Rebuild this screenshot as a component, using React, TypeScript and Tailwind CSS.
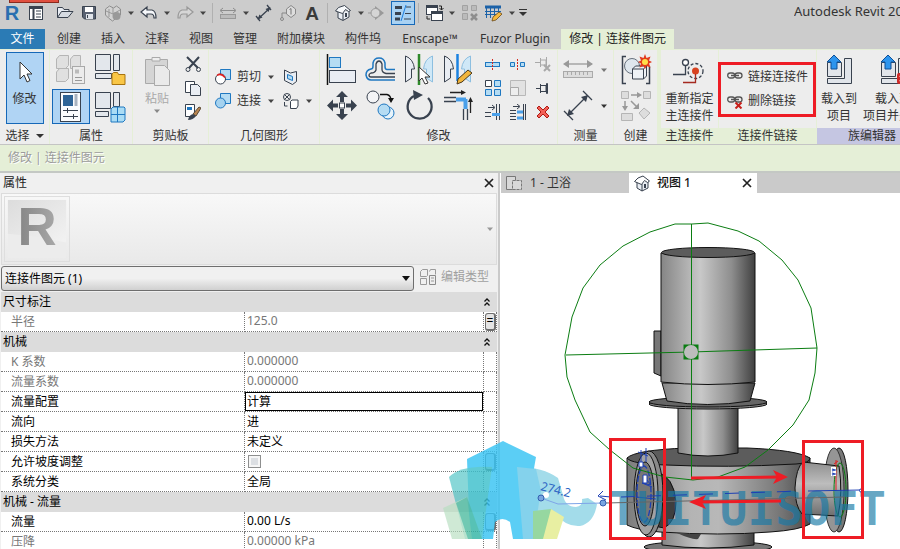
import type { ReactNode } from "react";

const INK = "#39424f";
const PALE = "#e9edf3";
const GREY = "#a9a9a9";
const BLUE = "#1f78c1";
const SKY = "#b5dcf3";

function Icon({ size = 32, children }: { size?: number; children: ReactNode }) {
  return (
    <svg width={size} height={size} viewBox={`0 0 ${size} ${size}`} fill="none" className="shrink-0" aria-hidden="true">
      {children}
    </svg>
  );
}

function Caret({ color = "#444" }: { color?: string }) {
  return (
    <svg width="8" height="8" viewBox="0 0 8 8" className="shrink-0" aria-hidden="true">
      <path d="M1 2.500h6L4 6z" fill={color} />
    </svg>
  );
}

const qat = [
  {
    name: "属性窗口",
    icon: (
      <>
        <rect x="5.500" y="5.500" width="13" height="13" fill="#fff" stroke={INK} />
        <path d="M5 7h14M9.500 7v12" stroke={INK} strokeWidth="2" />
        <path d="M12 10h5M12 13h5M12 16h5" stroke={INK} />
      </>
    ),
  },
  {
    name: "打开",
    gap: true,
    icon: (
      <>
        <path d="M4.500 16.500v-10h5l1.500 2h5v2" fill={PALE} stroke={INK} />
        <path d="M4.500 16.500l4-6h11.500l-5 6z" fill="#d6dbe2" stroke={INK} />
      </>
    ),
  },
  {
    name: "保存",
    icon: (
      <>
        <path d="M5.500 5.500h13v12.500h-11l-2-2z" fill="#596272" stroke={INK} />
        <rect x="8" y="6" width="8" height="5" fill="#fff" />
        <rect x="9" y="13" width="7" height="5" fill="#dfe3e9" />
        <path d="M10.500 14v3" stroke={INK} />
      </>
    ),
  },
  {
    name: "同步",
    caret: true,
    icon: (
      <>
        <path d="M4.500 8l4-3 4 2 3-2 4 3v6l-4 3-4 3-4-3-3-3z" fill="#d2d2d2" stroke="#8e8e8e" />
        <path d="M8 8v8M12 7v6M5 10l7 3 7-4" stroke="#999" />
        <circle cx="15.500" cy="15" r="4" fill="#999" />
      </>
    ),
  },
  {
    name: "放弃",
    caret: true,
    icon: <path d="M4 11l6-5v3h5q4 1 4 8h-2q0-4-3-4h-4v3z" fill="#f5f7fa" stroke={INK} strokeWidth="1.200" />,
  },
  {
    name: "重做",
    caret: true,
    icon: <path d="M20 11l-6-5v3h-5q-4 1-4 8h2q0-4 3-4h4v3z" fill="#d6d6d6" stroke="#999" strokeWidth="1.200" />,
    sep: true,
  },
  {
    name: "测量",
    caret: true,
    icon: (
      <>
        <path d="M5 9.500h14M7 7l-3 2.500 3 2.500M17 7l3 2.500-3 2.500" stroke="#8d8d8d" />
        <rect x="4.500" y="13.500" width="15" height="4" fill="#bbb" stroke="#999" />
      </>
    ),
  },
  {
    name: "对齐尺寸标注",
    icon: (
      <>
        <path d="M6 18L18 7M4 15l4 5M15 4l4 5" stroke={INK} strokeWidth="1.300" />
        <path d="M5.500 18.500l2-5 3 3zM18.500 6l-5 2 3 3z" fill={INK} />
      </>
    ),
  },
  {
    name: "按类别标记",
    icon: (
      <>
        <path d="M6 18v-6h5" stroke="#888" />
        <circle cx="6" cy="18" r="1.500" fill="#ccc" stroke="#888" />
        <path d="M10.500 8l4.500-3.500 4.500 3.500v5l-4.500 3.500-4.500-3.500z" fill="#ddd" stroke="#888" />
        <path d="M13.500 8.500L15 7.500v6" stroke="#777" />
      </>
    ),
  },
  {
    name: "文字",
    icon: (
      <text x="12" y="19" textAnchor="middle" fontSize="19" fontWeight="700" fill="#3a3a3a" className="font-['Liberation_Sans',sans-serif]">
        A
      </text>
    ),
    sep: true,
  },
  {
    name: "默认三维视图",
    caret: true,
    icon: (
      <>
        <path d="M7 11v6l5 2.500 6-3.500v-6" fill={PALE} stroke={INK} />
        <path d="M4.500 10l3-3.500 6-2 6 5-2 1-3-2-3 4z" fill="#f7f9fb" stroke={INK} />
        <path d="M12 12v7" stroke={INK} />
        <rect x="14" y="12" width="2" height="4" fill={INK} />
      </>
    ),
  },
  {
    name: "剖面",
    icon: (
      <>
        <path d="M8 5l9 7-9 7z" fill="#999" />
        <circle cx="8.500" cy="12" r="4.500" fill="#d5d5d5" stroke="#999" />
        <path d="M1 12h3" stroke="#999" />
      </>
    ),
  },
  {
    name: "细线",
    selected: true,
    icon: (
      <>
        <path d="M4 6.500h7M4 12.500h6M4 18h5" stroke={INK} strokeWidth="3" />
        <path d="M15 6h5M14 12.500h6M13 18h7" stroke={INK} />
        <path d="M15 4l-5 16" stroke="#1b7fe0" />
      </>
    ),
    sep: true,
  },
  {
    name: "切换窗口",
    caret: true,
    icon: (
      <>
        <rect x="4.500" y="4.500" width="11" height="9" fill="#fff" stroke={INK} />
        <path d="M4 6h12" stroke={INK} strokeWidth="2" />
        <rect x="9.500" y="10.500" width="11" height="9" fill="#fff" stroke={INK} />
        <path d="M9 12h12" stroke={INK} strokeWidth="2" />
        <path d="M17 5h2.500v4M17.500 7l2 2 2-2M5 15v3h3" stroke="#222" />
      </>
    ),
  },
  {
    name: "关闭隐藏",
    icon: (
      <>
        <path d="M4.500 4.500h5v5h-5zM13.500 4.500h5v5h-5zM4.500 12.500h5v6h-5z" fill="#bbb" stroke="#a2a2a2" />
        <path d="M13 13l6 6M19 13l-6 6" stroke="#8e8e8e" strokeWidth="2.500" />
      </>
    ),
  },
  {
    name: "明细表",
    caret: true,
    icon: (
      <>
        <path d="M3 6h16" stroke="#1c62a8" strokeWidth="3" />
        <path d="M4.500 7v10M8.500 7v10M12.500 7v8M16.500 7v5M3 10.500h16M3 13.500h12" stroke="#1c62a8" />
        <path d="M10 20l1-4 6-5 3 2-6 6z" fill="#f5b83d" stroke="#6b4a1b" strokeWidth=".8" />
      </>
    ),
  },
];

const tabs = ["创建", "插入", "注释", "视图", "管理", "附加模块", "构件坞"];

function QuickAccess() {
  return (
    <header className="relative flex h-[29px] items-center pb-1">
      <Icon size={24}>
        <text x="12" y="19" textAnchor="middle" fontSize="20" fontWeight="700" fill="#2a6fb0" className="font-['Liberation_Sans',sans-serif]">
          R
        </text>
      </Icon>
      <div className="absolute top-0 left-[9px] h-[3px] w-[50px] border border-t-0 border-[#8a2a1e] bg-[#e04f3f]" />
      {qat.map((item) => (
        <div key={item.name} className={item.gap ? "ml-[5px] flex items-center" : "flex items-center"}>
          <button
            type="button"
            aria-label={item.name}
            className={item.selected ? "bg-[#a9d2f3] outline-1 -outline-offset-1 outline-[#1668b8]" : ""}
          >
            <Icon size={24}>{item.icon}</Icon>
          </button>
          {item.caret && (
            <span className="flex w-3 justify-center">
              <Caret />
            </span>
          )}
          {item.sep && <span className="mx-[3px] h-5 w-px bg-[#b0b0b0]" />}
        </div>
      ))}
      <button type="button" aria-label="自定义快速访问工具栏" className="w-3">
        <svg width="10" height="10" viewBox="0 0 10 10" aria-hidden="true">
          <path d="M1 1.500h8" stroke="#333" />
          <path d="M1 4h8L5 8z" fill="#333" />
        </svg>
      </button>
      <h1 className="ml-auto w-[106px] overflow-hidden pb-1 text-[13px] leading-5 font-normal whitespace-nowrap text-[#333]">
        Autodesk Revit 2020
      </h1>
    </header>
  );
}

function Tabs() {
  return (
    <nav className="flex h-5 overflow-hidden leading-5 whitespace-nowrap text-[#333]">
      <button type="button" className="mr-0.5 w-[45px] shrink-0 bg-[#2b7bb5] text-white">
        文件
      </button>
      {tabs.map((tab) => (
        <button key={tab} type="button" className="shrink-0 px-2.5">
          {tab}
        </button>
      ))}
      <button type="button" className="w-[78px] shrink-0">
        Enscape™
      </button>
      <button type="button" className="w-[92px] shrink-0">
        Fuzor Plugin
      </button>
      <button type="button" className="w-[113px] shrink-0 bg-[#e5efd7] text-[#222]">
        修改 | 连接件图元
      </button>
    </nav>
  );
}

const propertyIcons = [
  {
    name: "类型属性",
    icon: (
      <>
        <path d="M1.500 5l3-3.500h9v10l-3 3h-9zM15.500 5l3-3.500h7v10l-2 3h-8zM1.500 18l3-3.500h9v10l-3 3h-9z" fill="#e0e0e0" stroke="#b5b5b5" />
        <rect x="17.500" y="12.500" width="12" height="17" fill="#ececec" stroke="#a9a9a9" />
        <path d="M20 15.500h4v4h-4z" fill="#bbb" />
        <path d="M20 23.500h7M20 26.500h7" stroke="#999" />
      </>
    ),
  },
  {
    name: "族类别和族参数",
    icon: (
      <>
        <path d="M.5.500h15v16H.5zM18.500.500h6v16h-6zM.5 19.500h16v5H.5z" fill="#e3e7ec" stroke={INK} />
        <path d="M17 30.500V20l1.500-1.500h4l1 2h6.500v10z" fill="#f9c646" stroke="#a87410" />
      </>
    ),
  },
  {
    name: "属性",
    selected: true,
    icon: (
      <>
        <rect x="5.500" y="1.500" width="20" height="29" fill="#fbfcfd" stroke={INK} />
        <rect x="8" y="4" width="10" height="11" fill="#2f6496" />
        <path d="M21 3v12" stroke="#a9b3bf" strokeWidth="3" />
        <path d="M8 19.500h15M8 25.500h15M12.500 17v5M18.500 23v5" stroke={INK} />
      </>
    ),
  },
  {
    name: "族类型",
    icon: (
      <>
        <path d="M.5 1.500h15v16H.5zM18.500 1.500h6v14h-6zM.5 20.500h13v5H.5z" fill="#e3e7ec" stroke={INK} />
        <path d="M16 18l2-2h11l1 1v12l-2 2H16z" fill="#aadcf5" stroke={BLUE} />
        <path d="M16 23.500h14M22.500 16v15" stroke={BLUE} />
      </>
    ),
  },
];

const clipboardIcons = [
  {
    name: "剪切到剪贴板",
    icon: (
      <>
        <path d="M2 1l11 11M14 1L4 12" stroke={INK} strokeWidth="2" />
        <circle cx="3" cy="13.500" r="2" stroke={INK} />
        <circle cx="13.500" cy="13.500" r="2" stroke={INK} />
      </>
    ),
  },
  {
    name: "复制到剪贴板",
    icon: (
      <>
        <path d="M.5 1.500h9v11h-9z" fill="#fff" stroke={INK} />
        <path d="M5.500 4.500h7l3 3v8h-10z" fill={PALE} stroke={INK} />
      </>
    ),
  },
  {
    name: "匹配类型属性",
    icon: (
      <>
        <path d="M.5.500h9v12h-9z" fill="#fff" stroke={INK} />
        <path d="M2 3h5v3H2z" fill={BLUE} />
        <path d="M8 10l6-7 2 1-5 8z" fill="#b98550" stroke="#5a4a35" />
        <path d="M3 16q1-5 5-6l3 2q-3 4-8 4z" fill={INK} />
      </>
    ),
  },
];

const modifyIcons = [
  {
    name: "对齐",
    icon: (
      <>
        <path d="M1.500 0v31" stroke="#111" strokeWidth="1.500" />
        <rect x="3.500" y="3.500" width="11" height="10" fill={SKY} stroke={BLUE} />
        <rect x="3.500" y="16.500" width="26" height="12" fill={PALE} stroke={INK} />
      </>
    ),
  },
  {
    name: "偏移",
    icon: (
      <>
        <path d="M30 15.500h-8q-2 0-2-3V9q-1-5-6-5T8 9v3q0 3-2 3-5 1-5 6 1 5 5 5h24" stroke={BLUE} strokeWidth="1.500" />
        <path d="M30 19.500h-9q-4-1-4-4V10q-1-3-3-3t-3 3v6q-1 3-5 3-2 1-2 2 0 2 2 2h24" stroke={INK} strokeWidth="1.300" />
      </>
    ),
  },
  {
    name: "镜像 - 拾取轴",
    icon: (
      <>
        <path d="M1.500 2q8 3 9 13h-3v9l-6 4z" fill={PALE} stroke={INK} />
        <path d="M28.500 2q-8 3-9 13h3v9l6 4z" fill="#cfe8f7" stroke="#8dbfe0" />
        <path d="M15 0v31" stroke="#2f8a2b" strokeWidth="2.500" />
        <path d="M15 13v14l3-3 3 6 3-1-3-6h5z" fill="#fff" stroke="#333" />
      </>
    ),
  },
  {
    name: "镜像 - 绘制轴",
    icon: (
      <>
        <path d="M1.500 2q8 3 9 13h-3v9l-6 4z" fill={PALE} stroke={INK} />
        <path d="M27.500 2q-8 3-9 13h3v9l6 4z" fill="#cfe8f7" stroke="#8dbfe0" />
        <path d="M14.500 0v27" stroke="#1b82e0" strokeWidth="2.500" />
        <path d="M14 30l1-5 10-9 4 3-10 9z" fill="#f2b63c" stroke="#4a3719" />
      </>
    ),
  },
  {
    name: "移动",
    icon: (
      <>
        <path d="M16 1l6 6h-4v5h-4V7h-4zM16 30l6-6h-4v-5h-4v5h-4zM1 15.500l6-6v4h5v4H7v4zM31 15.500l-6-6v4h-5v4h5v4z" fill={INK} />
        <rect x="13.500" y="13" width="5" height="5" fill="#fff" stroke={INK} />
      </>
    ),
  },
  {
    name: "复制",
    icon: (
      <>
        <circle cx="8" cy="7" r="6" fill="#f3f4f6" stroke={INK} />
        <path d="M15 4.500h7q4 1 4 6" stroke="#111" strokeWidth="1.300" />
        <path d="M23 8h6l-3 5z" fill="#111" />
        <circle cx="23" cy="23" r="6" fill="#e8f4fb" stroke={BLUE} />
        <circle cx="19" cy="20" r="6" fill={SKY} stroke={BLUE} />
      </>
    ),
  },
  {
    name: "旋转",
    icon: (
      <>
        <path d="M24 8a12 12 0 1 1-14-2" stroke={INK} strokeWidth="2.300" />
        <path d="M9 0l10 5-9 5z" fill={INK} />
      </>
    ),
  },
  {
    name: "修剪/延伸为角",
    icon: (
      <>
        <path d="M7 2.500h13M27.500 23V10" stroke="#222" strokeWidth="1.300" />
        <path d="M18 0l5 2.500-5 2.500zM25 12l2.500-5 2.500 5z" fill="#222" />
        <path d="M1 7.500h12M1 11.500h12M20.500 19v11M24.500 19v11" stroke={INK} strokeWidth="1.300" />
        <path d="M13 9.500h10M22.500 9v10" stroke="#4aa0ea" strokeWidth="4" />
      </>
    ),
  },
];

const smallModifyIcons = [
  {
    name: "拆分图元",
    icon: (
      <>
        <rect x=".5" y="6.500" width="14" height="4" fill={SKY} stroke={BLUE} />
        <path d="M7.500 3v11" stroke="#d5281e" strokeDasharray="2 1" />
      </>
    ),
  },
  {
    name: "用间隙拆分",
    icon: (
      <>
        <path d="M.5 6.500h4v4h-4zM10.500 6.500h4v4h-4z" fill={SKY} stroke={BLUE} />
        <path d="M7.500 3v11" stroke="#d5281e" strokeDasharray="2 1" />
      </>
    ),
  },
  {
    name: "解锁",
    icon: (
      <>
        <path d="M0 6.500h5M5.500 2v9M6 4h5v5H6M11.500 1v11" stroke={GREY} />
        <path d="M9 9l6 6M15 9l-6 6" stroke={GREY} strokeWidth="2" />
      </>
    ),
  },
  {
    name: "阵列",
    icon: (
      <>
        <path d="M.5.500h6v6h-6z" fill="#fff" stroke={INK} />
        <path d="M9.500.500h6v6h-6zM.5 9.500h6v6h-6zM9.500 9.500h6v6h-6z" fill={SKY} stroke={BLUE} />
      </>
    ),
  },
  {
    name: "缩放",
    icon: (
      <>
        <path d="M.5.500h15v15h-15z" fill="#e2e2e2" stroke="#b8b8b8" />
        <path d="M.5 7.500h8v8h-8z" fill="#eee" stroke="#a9a9a9" />
      </>
    ),
  },
  {
    name: "锁定",
    icon: (
      <path d="M1 8.500h4M5.500 4v9M6 5.500h5v6H6M11.500 3.500h1v10h-1z" stroke={INK} />
    ),
  },
  {
    name: "修剪/延伸单个图元",
    icon: (
      <>
        <path d="M3 3.500h6M7 1l3 2.500L7 6M0 8.500h6M0 12.500h6M11.500 0v16M14.500 0v16" stroke={INK} />
        <path d="M7 10.500h8" stroke="#4aa0ea" strokeWidth="3" />
      </>
    ),
  },
  {
    name: "修剪/延伸多个图元",
    icon: (
      <>
        <path d="M3 2.500h6M7 0l3 2.500L7 5M0 6.500h6M0 9.500h6M0 12.500h6M0 15.500h6M13.500 0v16M15.500 0v16" stroke={INK} />
        <path d="M7 8h6M7 14h6" stroke="#4aa0ea" strokeWidth="3" />
      </>
    ),
  },
  {
    name: "删除",
    icon: <path d="M2 4l2-2 4 4 4-4 2 2-4 4 4 4-2 2-4-4-4 4-2-2 4-4z" fill="#f26158" stroke="#b01a14" />,
  },
];

const measureIcons = [
  {
    name: "测量两个参照之间的距离",
    caret: "#777",
    icon: (
      <>
        <path d="M3 10h27" stroke="#999" strokeWidth="1.300" />
        <path d="M1 10l6-4v8zM31 10l-6-4v8z" fill="#999" />
        <rect x="1.500" y="17.500" width="29" height="6" fill="#ddd" stroke="#aaa" />
        <path d="M5.500 18v3M9.500 18v3M13.500 18v3M17.500 18v3M21.500 18v3M25.500 18v3" stroke="#aaa" />
      </>
    ),
  },
  {
    name: "对齐尺寸标注",
    caret: "#333",
    icon: (
      <>
        <path d="M6 25L25 6M2 21l9 9M21 1l9 9" stroke={INK} strokeWidth="1.300" />
        <path d="M5 26l2-7 5 5zM26 5l-7 2 5 5z" fill={INK} />
      </>
    ),
  },
];

const createIcons = [
  {
    name: "创建组",
    icon: (
      <>
        <path d="M6 2.500H2.500v27H6M26 29.500h3.500v-17" stroke={INK} strokeWidth="1.500" />
        <circle cx="12" cy="12" r="7.500" fill="#dfe7ee" stroke="#66707d" />
        <path d="M12.500 15l3-3h11v10l-3 3h-11z" fill="#eef2f6" stroke={INK} />
        <path d="M12.500 15h11v10M23.500 15l3-3" stroke={INK} />
        <path d="M25 0l1.500 4 4-1.500-1.500 4 3 1.500-3 1.500 1.500 4-4-1.500-1.500 3-1.500-3-4 1.500 1.500-4-3-1.500 3-1.500-1.500-4 4 1.500z" fill="#e23a1c" />
        <circle cx="25" cy="8" r="3" fill="#ffe04a" />
      </>
    ),
  },
  {
    name: "创建类似实例",
    icon: (
      <>
        <path d="M1.500 1.500h7v7h-7zM23.500 1.500h7v7h-7zM1.500 23.500h11v7h-11zM24 18l6 5-6 6-5-6z" fill="#ddd" stroke="#b5b5b5" />
        <path d="M11 5h8M5 11v7M11 11l6 6" stroke="#999" strokeWidth="1.500" />
        <path d="M17 2l5 3-5 3zM2 16h6l-3 5zM19 13v6h-6z" fill="#999" />
      </>
    ),
  },
];

function Panel({
  title,
  className,
  tone = "",
  children,
}: {
  title: ReactNode;
  className: string;
  tone?: string;
  children: ReactNode;
}) {
  return (
    <section className={`flex shrink-0 flex-col bg-[#ededed] ${className}`}>
      <div className="flex flex-1 items-start pt-0.5">{children}</div>
      <h2 className={`flex h-4 items-center justify-center gap-1.5 leading-4 font-normal ${tone}`}>{title}</h2>
    </section>
  );
}

function LoadIcon({ close }: { close?: boolean }) {
  return (
    <Icon>
      <path d="M4.500 7.500h14v14h-14zM21.500 3.500h7v25h-24v-5h17z" fill="#e1e5ea" stroke={INK} />
      <path d="M11 0l7 7h-4v7H8V7H4z" fill="#2d95ee" stroke="#0f4f96" />
      {close && (
        <>
          <rect x="20" y="18" width="12" height="11" rx="2" fill="#cf2a27" />
          <path d="M23 20.500l6 6M29 20.500l-6 6" stroke="#fff" strokeWidth="2" />
        </>
      )}
    </Icon>
  );
}

function ChainIcon({ remove }: { remove?: boolean }) {
  return (
    <Icon size={16}>
      <rect x=".7" y="4" width="7" height="5" rx="2.500" stroke="#555" strokeWidth="1.300" />
      <rect x="8" y="4" width="7" height="5" rx="2.500" stroke="#555" strokeWidth="1.300" />
      <path d="M4 6.500h8" stroke="#555" strokeWidth="1.500" />
      {remove && <path d="M8.500 9.500l6 6M14.500 9.500l-6 6" stroke="#c8201c" strokeWidth="2" />}
    </Icon>
  );
}

function Ribbon() {
  return (
    <div className="flex h-24 gap-px overflow-hidden border-t border-b border-t-[#e5efd7] border-b-[#c4c4c4] bg-[#e5efd7] whitespace-nowrap text-[#333]">
      <Panel
        className="w-[49px]"
        title={
          <>
            选择
            <svg width="8" height="4" viewBox="0 0 8 4" aria-hidden="true">
              <path d="M0 0h8L4 4z" fill="#333" />
            </svg>
          </>
        }
      >
        <button type="button" className="mx-auto flex h-[72px] w-[38px] flex-col items-center border border-[#1668b8] bg-[#b0d4f4] leading-[17px]">
          <span className="flex h-[37px] items-center">
            <Icon size={24}>
              <path d="M7 2v17l4-4 3 7 3-1.500-3-6.500h5z" fill="#fff" stroke="#333" />
            </Icon>
          </span>
          修改
        </button>
      </Panel>
      <Panel className="w-[82px]" title="属性">
        <div className="grid grid-cols-2 gap-0.5 pl-0.5">
          {propertyIcons.map((p) => (
            <button
              key={p.name}
              type="button"
              aria-label={p.name}
              className={
                p.selected
                  ? "flex h-[35px] w-[38px] items-center justify-center border border-[#1668b8] bg-[#b0d4f4]"
                  : "flex h-[35px] w-[38px] items-center justify-center"
              }
            >
              <Icon>{p.icon}</Icon>
            </button>
          ))}
        </div>
      </Panel>
      <Panel className="w-[75px]" title="剪贴板">
        <button type="button" className="flex w-12 flex-col items-center leading-[17px] text-[#a9a9a9]">
          <span className="flex h-[38px] items-center">
            <Icon>
              <path d="M4.500 4.500h22v24h-22z" fill="#d5d5d5" stroke="#aaa" />
              <path d="M11 6V2.500h8V6z" fill="#eee" stroke="#aaa" />
              <path d="M13.500 10.500h10l5 5v15h-15z" fill="#eaeaea" stroke="#aaa" />
            </Icon>
          </span>
          粘贴
          <Caret color="#888" />
        </button>
        <div className="flex flex-col">
          {clipboardIcons.map((c) => (
            <button key={c.name} type="button" aria-label={c.name} className="flex size-6 items-center justify-center">
              <Icon size={16}>{c.icon}</Icon>
            </button>
          ))}
        </div>
      </Panel>
      <Panel className="w-[110px]" title="几何图形">
        <div className="flex flex-col pt-[13px] pl-1.5">
          <div className="flex h-6 items-center gap-2">
            <button type="button" className="flex items-center gap-1.5">
              <Icon size={16}>
                <path d="M5.500.500h10v10h-10z" fill={SKY} stroke={BLUE} />
                <circle cx="5.500" cy="10" r="5" fill="#fff" stroke={INK} />
                <path d="M2 6.500q4-3 8 2" stroke="#e02020" strokeWidth="1.500" />
              </Icon>
              剪切
              <Caret />
            </button>
            <button type="button" aria-label="拆分面">
              <Icon size={16}>
                <path d="M1.500 1l6 3 6-1.500v10l-4 3-8-4z" fill={PALE} stroke={INK} />
                <path d="M4.500 5.500l5 2v4l-5-2z" fill={SKY} stroke={BLUE} />
              </Icon>
            </button>
          </div>
          <div className="flex h-6 items-center gap-2">
            <button type="button" className="flex items-center gap-1.5">
              <Icon size={16}>
                <path d="M5.500.500h10v10h-10z" fill={SKY} stroke={BLUE} />
                <circle cx="5.500" cy="10" r="5" fill="#a5d2ef" stroke={BLUE} />
              </Icon>
              连接
              <Caret />
            </button>
            <button type="button" aria-label="连接端切割" className="flex items-center gap-1.5">
              <Icon size={16}>
                <circle cx="4" cy="4" r="3.500" stroke={INK} />
                <path d="M1.500 1.500l5 5M6.500 1.500l-5 5M1.500 9v4h3" stroke={INK} />
                <path d="M7.500 8.500l1.500-1.500h6v6l-1.500 2.500h-6z" fill="#fff" stroke={INK} />
              </Icon>
              <Caret />
            </button>
          </div>
        </div>
      </Panel>
      <Panel className="w-[237px]" title="修改">
        <div className="grid grid-cols-4 pl-0.5">
          {modifyIcons.map((m) => (
            <button key={m.name} type="button" aria-label={m.name} className="flex h-9 w-[39px] items-center justify-center">
              <Icon>{m.icon}</Icon>
            </button>
          ))}
        </div>
        <div className="ml-0.5 grid grid-cols-3">
          {smallModifyIcons.map((m) => (
            <button key={m.name} type="button" aria-label={m.name} className="flex h-6 w-[25px] items-center justify-center">
              <Icon size={16}>{m.icon}</Icon>
            </button>
          ))}
        </div>
      </Panel>
      <Panel className="w-[55px]" title="测量">
        <div className="flex flex-col pl-1">
          {measureIcons.map((m) => (
            <button key={m.name} type="button" aria-label={m.name} className="flex h-9 items-center gap-1.5">
              <Icon>{m.icon}</Icon>
              <Caret color={m.caret} />
            </button>
          ))}
        </div>
      </Panel>
      <Panel className="mr-[3px] w-[43px]" title="创建">
        <div className="mx-auto flex flex-col">
          {createIcons.map((c) => (
            <button key={c.name} type="button" aria-label={c.name} className="flex h-9 items-center">
              <Icon>{c.icon}</Icon>
            </button>
          ))}
        </div>
      </Panel>
      <Panel className="w-[57px]" title="主连接件" tone="bg-[#e5efd7]">
        <button type="button" className="mx-auto flex flex-col items-center leading-[17px]">
          <span className="flex h-[38px] items-center">
            <Icon>
              <path d="M0 19.500h12.500V11" stroke={INK} strokeWidth="1.300" />
              <circle cx="12.500" cy="7.500" r="3" fill="#fff" stroke={INK} strokeWidth="1.300" />
              <circle cx="22.500" cy="16" r="7.500" stroke={INK} strokeWidth="1.300" strokeDasharray="3 2" />
              <circle cx="22.500" cy="16" r="3.500" fill="#d8421f" />
              <path d="M22.500 19v8.500H10" stroke="#a52a20" strokeWidth="1.300" />
            </Icon>
          </span>
          <span>重新指定</span>
          <span>主连接件</span>
        </button>
      </Panel>
      <Panel className="w-[97px]" title="连接件链接" tone="bg-[#e5efd7]">
        <div className="relative flex flex-col pt-[13px] pl-2">
          <button type="button" className="flex h-6 items-center gap-[5px]">
            <ChainIcon />
            链接连接件
          </button>
          <button type="button" className="flex h-6 items-center gap-[5px]">
            <ChainIcon remove />
            删除链接
          </button>
          <span className="pointer-events-none absolute top-2.5 -left-px h-[55px] w-[98px] border-[3px] border-[#ee1c25]" />
        </div>
      </Panel>
      <Panel className="w-[110px]" title="族编辑器" tone="bg-[#c5c6e2]">
        <button type="button" className="flex w-11 flex-col items-center leading-[17px]">
          <span className="flex h-[38px] items-center">
            <LoadIcon />
          </span>
          <span>载入到</span>
          <span>项目</span>
        </button>
        <button type="button" className="flex w-16 flex-col items-center leading-[17px]">
          <span className="flex h-[38px] items-center">
            <LoadIcon close />
          </span>
          <span>载入到</span>
          <span>项目并关闭</span>
        </button>
      </Panel>
    </div>
  );
}

type Row = { label: string; value?: string; off?: boolean; assoc?: string; check?: boolean; active?: boolean };

const groups: { title: string; rows: Row[] }[] = [
  { title: "尺寸标注", rows: [{ label: "半径", value: "125.0", off: true, assoc: "=" }] },
  {
    title: "机械",
    rows: [
      { label: "K 系数", value: "0.000000", off: true },
      { label: "流量系数", value: "0.000000", off: true },
      { label: "流量配置", value: "计算", active: true },
      { label: "流向", value: "进" },
      { label: "损失方法", value: "未定义" },
      { label: "允许坡度调整", check: true, assoc: " " },
      { label: "系统分类", value: "全局" },
    ],
  },
  {
    title: "机械 - 流量",
    rows: [
      { label: "流量", value: "0.00 L/s", assoc: " " },
      { label: "压降", value: "0.00000 kPa", off: true },
    ],
  },
];

function PropertyRow({ row }: { row: Row }) {
  return (
    <tr className={row.off ? "text-[#777]" : "text-black"}>
      <th scope="row" className="h-5 border-r border-b border-dotted border-[#777] p-0 pl-2.5 text-left font-normal">
        <label htmlFor={row.label}>{row.label}</label>
      </th>
      <td className="h-5 border-r border-b border-dotted border-[#777] p-0">
        {row.check ? (
          <input
            id={row.label}
            type="checkbox"
            className="ml-[3px] block size-[13px] appearance-none border border-[#8e8f8f] bg-[#dcdfe3] shadow-[inset_0_0_0_2px_#f6f6f6]"
          />
        ) : (
          <input
            id={row.label}
            type="text"
            defaultValue={row.value}
            disabled={row.off}
            className={
              row.active
                ? "block h-[19px] w-full pb-0.5 pl-0.5 outline-1 -outline-offset-1 outline-black"
                : "block h-[19px] w-full pb-0.5 pl-0.5"
            }
          />
        )}
      </td>
      <td className="h-5 border-r border-b border-dotted border-[#777] p-0">
        {row.assoc && (
          <button
            type="button"
            aria-label={`关联${row.label}`}
            className="ml-auto block h-[18px] w-[11px] rounded-[3px] border border-r-2 border-b-2 border-[#6e6e6e] bg-[#e4e4e4] text-[12px] leading-[14px] text-black"
          >
            {row.assoc}
          </button>
        )}
      </td>
    </tr>
  );
}

function Properties() {
  return (
    <aside className="flex w-[500px] shrink-0 flex-col overflow-hidden border-r-2 border-[#cacaca] bg-[#f0f0f0] pr-px pl-px">
      <div className="flex h-5 shrink-0 items-center justify-between pr-[3px] pl-0.5 text-[#222]">
        <h2 className="font-normal">属性</h2>
        <button type="button" aria-label="关闭属性">
          <CloseIcon />
        </button>
      </div>
      <div className="flex h-[72px] shrink-0 items-center justify-between border border-[#dcdcdc] bg-linear-to-b from-[#f8f8f8] to-[#e9e9e9] pr-0.5 pl-0.5">
        <svg width="66" height="66" viewBox="0 0 66 66" className="border border-[#dedede]" aria-hidden="true">
          <defs>
            <linearGradient id="thumb" x1="0" x2="1" y2="1">
              <stop offset="0" stopColor="#dcdcdc" />
              <stop offset="1" stopColor="#f2f2f2" />
            </linearGradient>
            <linearGradient id="letter" x1="0" x2="1">
              <stop offset="0" stopColor="#868686" />
              <stop offset="1" stopColor="#a8a8a8" />
            </linearGradient>
          </defs>
          <rect x="3" y="3" width="60" height="60" fill="#ececec" />
          <path d="M3 3h60v44l-30-6-30-3z" fill="url(#thumb)" />
          <text x="13" y="49" fontSize="56" fontWeight="700" fill="url(#letter)" className="font-['Liberation_Sans',sans-serif]">
            R
          </text>
        </svg>
        <Caret color="#999" />
      </div>
      <div className="flex h-[27px] shrink-0 items-center">
        <div className="relative w-[413px] shrink-0">
          <select
            aria-label="类型选择器"
            className="block h-[25px] w-full appearance-none rounded-[3px] border border-[#6e6e6e] bg-linear-to-b from-[#f0f0f0] from-50% to-[#d0d0d0] to-100% pl-[3px] text-black"
          >
            <option>连接件图元 (1)</option>
          </select>
          <svg width="8" height="5" viewBox="0 0 8 5" className="pointer-events-none absolute top-2.5 right-1" aria-hidden="true">
            <path d="M0 0h8L4 5z" fill="#111" />
          </svg>
        </div>
        <button type="button" disabled className="ml-1.5 flex items-center gap-[5px] pb-1 text-[#a0a0a0]">
          <Icon size={16}>
            <path d="M.5 2.500l2-2h5v6l-1 1h-6zM9.500 2.500l1-2h5v5M.5 9.500h6v6h-6z" stroke="#9a9a9a" />
            <path d="M9.500 6.500h6v9h-6z" fill="#eee" stroke="#8a8a8a" />
            <path d="M11 9h3M11 12h3" stroke="#999" />
          </Icon>
          编辑类型
        </button>
      </div>
      <table className="w-full table-fixed border-separate border-spacing-0 bg-white leading-4">
        <colgroup>
          <col className="w-[244px]" />
          <col />
          <col className="w-[13px]" />
        </colgroup>
        {groups.map((group) => (
          <tbody key={group.title}>
            <tr className="bg-[#dcdcdc] text-black">
              <th scope="rowgroup" colSpan={3} className="h-5 p-0 font-normal">
                <button type="button" className="flex w-full items-center justify-between pr-1.5 pl-0.5">
                  {group.title}
                  <svg width="8" height="10" viewBox="0 0 8 10" fill="none" aria-hidden="true">
                    <path d="M1.500 4.500L4 2l2.500 2.500M1.500 8.500L4 6l2.500 2.500" stroke="#111" strokeWidth="1.300" />
                  </svg>
                </button>
              </th>
            </tr>
            {group.rows.map((row) => (
              <PropertyRow key={row.label} row={row} />
            ))}
          </tbody>
        ))}
      </table>
    </aside>
  );
}

function CloseIcon() {
  return (
    <svg width="10" height="10" viewBox="0 0 10 10" aria-hidden="true">
      <path d="M1 1l8 8M9 1L1 9" stroke="#222" strokeWidth="1.700" />
    </svg>
  );
}

function Model() {
  return (
    <svg width="399" height="356" viewBox="501 193 399 356" fill="none" className="block shrink-0" role="img" aria-label="水泵三维视图">
      <defs>
        <linearGradient id="steel">
          <stop offset="0" stopColor="#858585" />
          <stop offset=".42" stopColor="#c8c8c8" />
          <stop offset=".75" stopColor="#8e8e8e" />
          <stop offset="1" stopColor="#404040" />
        </linearGradient>
        <linearGradient id="casing">
          <stop offset="0" stopColor="#7d7d7d" />
          <stop offset=".35" stopColor="#b4b4b4" />
          <stop offset=".5" stopColor="#b8b8b8" />
          <stop offset=".85" stopColor="#747474" />
          <stop offset="1" stopColor="#4a4a4a" />
        </linearGradient>
        <linearGradient id="pipe" x2="0" y2="1">
          <stop offset="0" stopColor="#8f8f8f" />
          <stop offset=".4" stopColor="#bdbdbd" />
          <stop offset="1" stopColor="#6e6e6e" />
        </linearGradient>
      </defs>

      {/* base */}
      <ellipse cx="708" cy="547" rx="64" ry="6" fill="#777" stroke="#111" />
      <path d="M662 528v17q46 6 92 0v-17z" fill="url(#steel)" stroke="#111" />

      {/* casing */}
      <path d="M627 458v67q10 5 33 7 60 4 110 0 30-2 40-8v-66z" fill="url(#casing)" stroke="#111" />
      <path d="M627 458q8-8 60-10h60q50 2 63 10 0 5-14 6-70 4-130 1-35-1-39-7z" fill="#5c5c5c" stroke="#111" />
      <path d="M677 533q12 1 24 1l-3 5q-6 1-21-6z" fill="#444" />

      {/* motor */}
      <path d="M678 405v48q30 6 60 0v-48z" fill="url(#steel)" stroke="#111" />
      <ellipse cx="708" cy="404" rx="59" ry="5" fill="#888" stroke="#111" />
      <ellipse cx="708" cy="402" rx="59" ry="5" fill="#666" stroke="#111" />
      <path d="M662 383l5 18q40 7 83 0l5-18z" fill="url(#steel)" stroke="#111" />
      <path d="M654 331h7v45l-7-3z" fill="#777" stroke="#111" />
      <path d="M661 253v129q47 5 94 0V253z" fill="url(#steel)" stroke="#111" />
      <ellipse cx="708" cy="252.500" rx="46.500" ry="5" fill="#5c5c5c" stroke="#111" />

      {/* inlet */}
      <path d="M656 472q18 4 20 30 0 20-12 26l-10-2z" fill="#3f3f3f" stroke="#111" />
      <ellipse cx="649" cy="494" rx="14" ry="43" fill="#8a8a8a" stroke="#111" />
      <ellipse cx="646" cy="494" rx="12" ry="41" fill="#a2a2a2" stroke="#111" />
      <ellipse cx="645" cy="494" rx="9" ry="32" fill="#777" stroke="#111" />
      <ellipse cx="644" cy="494" rx="7" ry="28" stroke="#1c3fb4" strokeWidth="1.300" strokeDasharray="6 2" />
      <path d="M641 450v12M646 448v14M638 452l10 4M647 480l4 5-9-2 10 4M636 497l20 2" stroke="#1c3fb4" />
      <path d="M639 462h4v5h-4zM643 475h4v8h-4z" fill="#fff" stroke="#1c3fb4" />

      {/* outlet */}
      <ellipse cx="839" cy="490" rx="9" ry="42" fill="#777" stroke="#111" />
      <ellipse cx="834" cy="490" rx="10" ry="42" fill="#959595" stroke="#333" />
      <path d="M803 462l36 4q4 26-1 50l-36-2q-7-8-7-26 1-20 8-26z" fill="url(#pipe)" stroke="#111" />
      <ellipse cx="840" cy="490" rx="6" ry="27" stroke="#0a7d12" />
      <path d="M836 460v30M834 464l4-3" stroke="#e02020" />
      <path d="M831 467h5v9h-5z" fill="#fff" />
      <path d="M832 469l3 1-3 1M832 473l3 1-3 1" stroke="#1c3fb4" strokeWidth="1.300" />

      {/* rotation gizmo */}
      <g stroke="#0b7d12">
        <path d="M692 224l16-1 30 8 21 10 23 19 16 20 13 28 6 40-2 25-6 27-16 25-25 25-23 17-27 10-25 3-28-3-32-9-23-18-20-18-15-32-8-23-2-22 7-38 11-29 17-23 23-19 27-14 25-8z" />
        <path d="M691.500 224v256M566 355l125-3 126-4" />
        <rect x="684" y="345" width="14" height="14" fill="#0b7d12" />
      </g>
      <circle cx="691" cy="352" r="7" fill="#bdbdbd" />
    </svg>
  );
}

function Markup() {
  return (
    <svg
      width="457"
      height="114"
      viewBox="443 435 457 114"
      fill="none"
      className="pointer-events-none absolute top-[262px] left-[443px]"
      role="img"
      aria-label="TUITUISOFT"
    >
      <g opacity=".82">
        <path d="M517 467q26 0 41 11l5 17q2 12 13 12 7-1 6-8l6-1 9 6q-3 19-17 22-14 1-23-11l-22-4-11 28h-11z" fill="#8fd5e6" />
        <path d="M467 459l36-18 33 16-7 40-6 42h-10l-3-17q-8-6-15 0l-2 17h-23z" fill="#38c4f4" />
        <path d="M517 467l19 2 5 22-8 48h-10z" fill="#6ac9e8" />
        <path d="M449 477q12-12 43-10l-10 72h-17z" fill="#3dbfc0" fillOpacity=".75" />
        <path d="M443 508l24-11 5 42h-20z" fill="#b6dfc1" fillOpacity=".8" />
        <path d="M456 503l11-6 15 42h-14z" fill="#2fb096" fillOpacity=".7" />
        <path d="M533 511l18-2 10 8-15 22h-13z" fill="#7fcf8c" />
        <path d="M551 509l13 8-7 22h-14z" fill="#e4ec8e" />
      </g>
      <circle cx="546" cy="495" r="3" fill="#fff" />
      <text x="609" y="525" fontSize="46" fontWeight="700" fill="#1879a6" fillOpacity=".68" className="font-['DejaVu_Sans_Mono',monospace]">
        TUITUISOFT
      </text>

      {/* connector link */}
      <path d="M606 503l239-6" stroke="#666" />
      <path d="M621 497l180-6" stroke="#1c3fb4" strokeDasharray="14 12" />
      <path d="M808 491l52-1M603 491l-5 5 8 4M600 496l11 1" stroke="#1c3fb4" />
      <circle cx="861" cy="490.500" r="1.500" fill="#fff" stroke="#1c3fb4" />
      <path d="M541 498l17 6 45-1" stroke="#7ea5e8" />
      <circle cx="541" cy="498" r="3" fill="#78a6e0" stroke="#335fb0" />
      <circle cx="603" cy="503" r="3" fill="#78a6e0" stroke="#335fb0" />
      <text x="540" y="490" fontSize="12" fill="#2f66c4" transform="rotate(14 540 490)">
        274.2
      </text>

      <g stroke="#ee1c25" strokeWidth="3">
        <rect x="610.500" y="439.500" width="54" height="99" />
        <rect x="803.500" y="441.500" width="59" height="96" />
        <path d="M691 478l88-1M699 502l82-1" />
      </g>
      <path d="M788 477l-15-7 4 7-4 7zM689 502l17-7-4 7 4 7z" fill="#ee1c25" />
    </svg>
  );
}

function Viewport() {
  return (
    <section className="flex min-w-0 flex-1 flex-col overflow-hidden bg-white pl-px">
      <div className="flex h-5 shrink-0 bg-[#cacaca] leading-5 text-[#333]">
        <button type="button" className="flex w-32 items-center gap-2 pl-[5px]">
          <Icon size={16}>
            <path d="M.5 1.500h9v13h-9z" fill="#d8d8d8" stroke="#777" />
            <path d="M6.500 5.500h9v9h-9z" fill="#d8d8d8" stroke="#777" strokeDasharray="3 1" />
          </Icon>
          1 - 卫浴
        </button>
        <div className="flex w-32 items-center bg-white pr-[5px] pl-1 text-[#111]">
          <button type="button" className="flex flex-1 items-center gap-1.5 font-medium">
            <Icon size={18}>
              <path d="M4 8v6l5 3 6-3V8" fill={PALE} stroke={INK} />
              <path d="M1.500 7.500L5 4l5-2 6.500 5-2 1.500-3-2-3 4z" fill="#fff" stroke={INK} />
              <path d="M9 10v7" stroke={INK} />
              <path d="M12 10v4" stroke={INK} strokeWidth="2" />
            </Icon>
            视图 1
          </button>
          <button type="button" aria-label="关闭视图 1">
            <CloseIcon />
          </button>
        </div>
      </div>
      <Model />
    </section>
  );
}

export default function App() {
  return (
    <div className="flex h-screen flex-col overflow-hidden bg-[#cccccc] font-['Noto_Sans','Noto_Sans_CJK_SC',sans-serif] text-[12px] leading-4">
      <QuickAccess />
      <Tabs />
      <Ribbon />
      <div className="h-[26px] shrink-0 bg-[#e5efd7] pl-2 leading-[26px] text-[#9b9b9b] [text-shadow:1px_1px_0_#fff]">
        修改 | 连接件图元
      </div>
      <main className="relative flex min-h-0 flex-1 overflow-hidden border-t-2 border-[#c4c8c4]">
        <Properties />
        <Viewport />
        <Markup />
      </main>
    </div>
  );
}
